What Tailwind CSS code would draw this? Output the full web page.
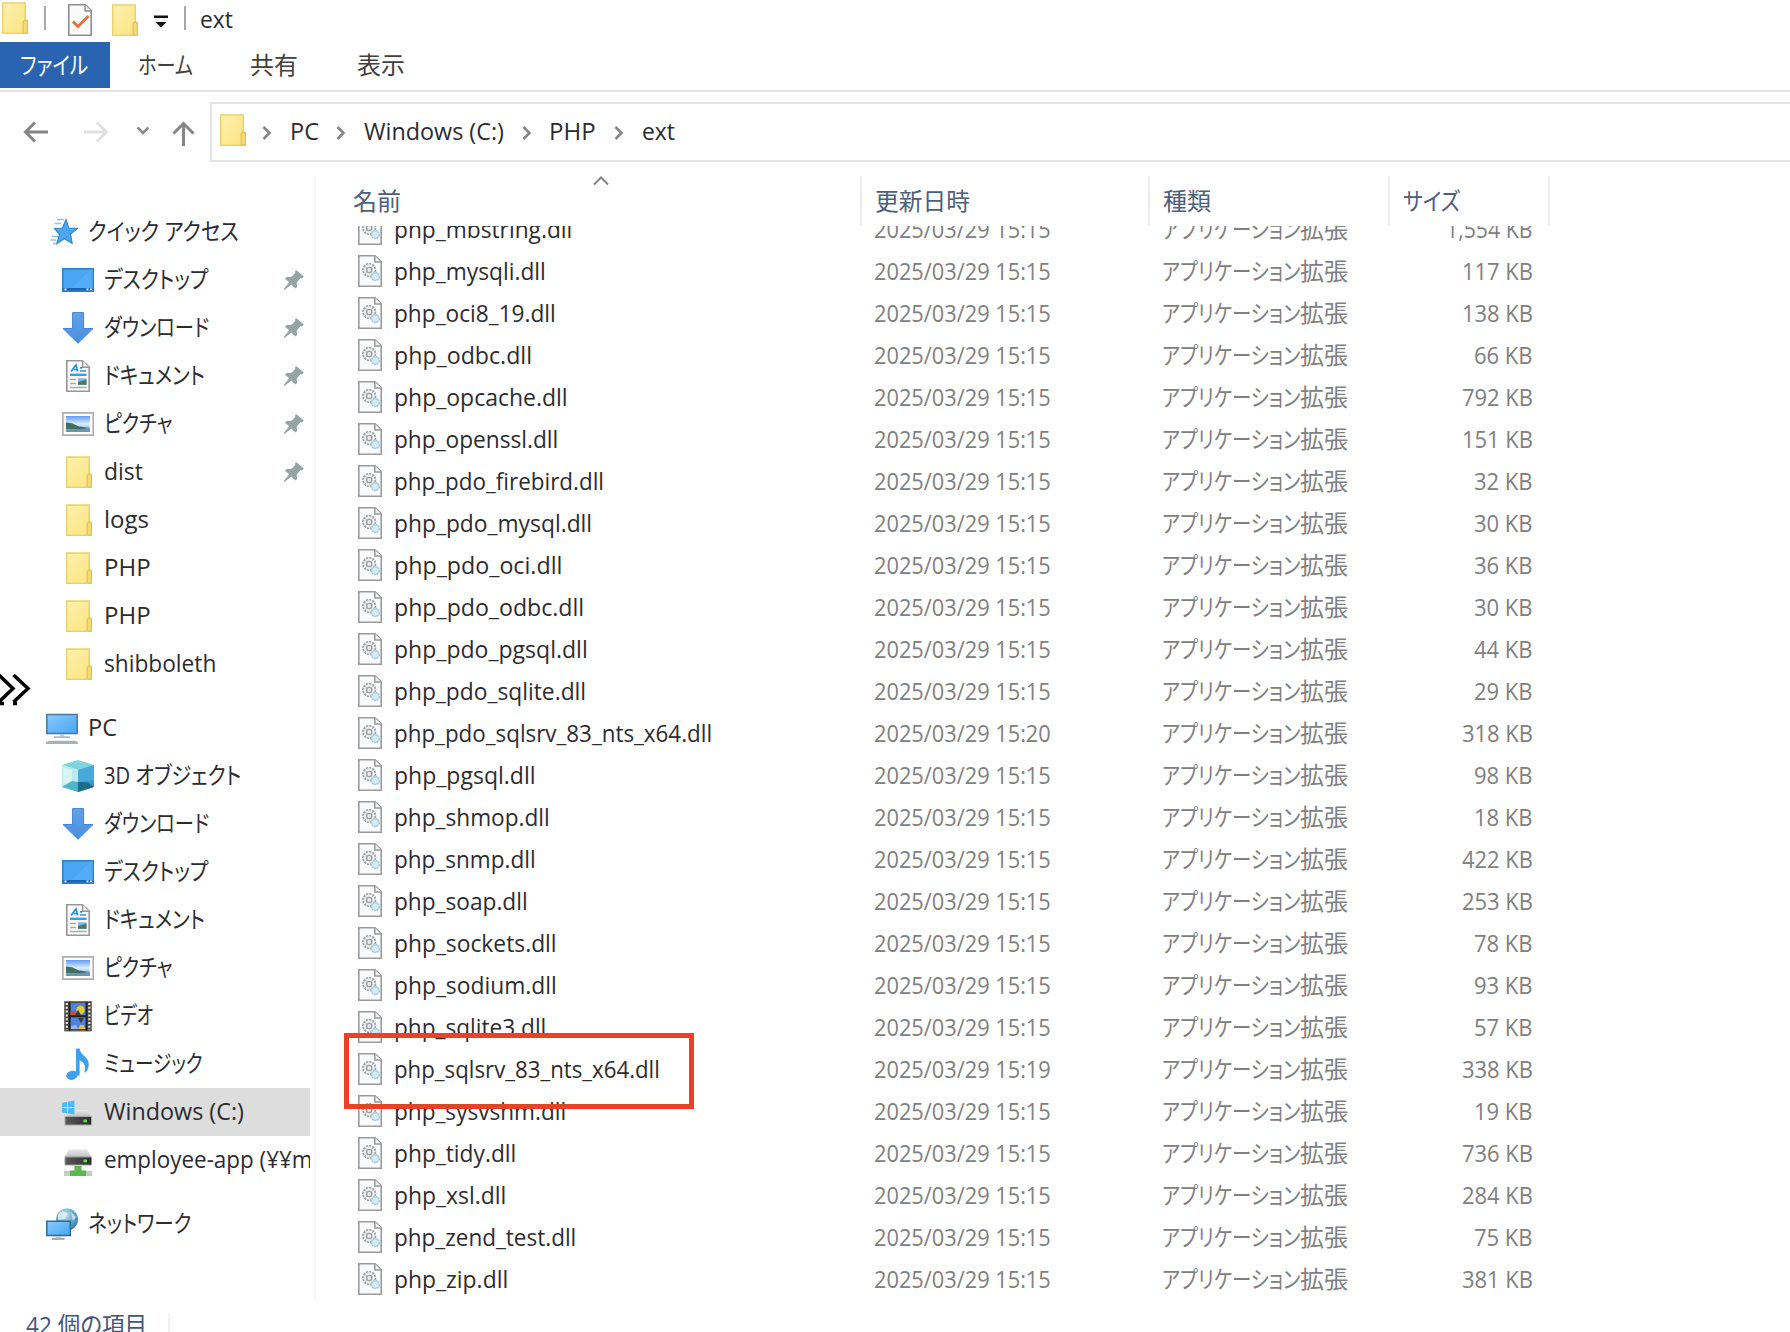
<!DOCTYPE html>
<html lang="ja">
<head>
    <meta charset="UTF-8">
    <meta name="viewport" content="width=device-width, initial-scale=1.0">
    <title>ext</title>
    <script src="https://cdn.jsdelivr.net/npm/@tailwindcss/browser@4"></script>
</head>
<body class="bg-white">
    <!-- icons -->
    <svg class="absolute size-0">
        <defs>
            <linearGradient id="g-folder" x1="0" y1="0" x2="1" y2="1"><stop offset="0" stop-color="#fff0ae"/><stop offset="1" stop-color="#fbe47f"/></linearGradient>
            <linearGradient id="g-screen" x1="0" y1="0" x2="1" y2="1"><stop offset="0" stop-color="#8ccbfc"/><stop offset="1" stop-color="#45a5f5"/></linearGradient>
            <linearGradient id="g-arrow" x1="0" y1="0" x2="0" y2="1"><stop offset="0" stop-color="#64a0e8"/><stop offset="1" stop-color="#4a8fe0"/></linearGradient>
            <linearGradient id="g-sky" x1="0" y1="0" x2="0" y2="1"><stop offset="0" stop-color="#5f9cf5"/><stop offset=".5" stop-color="#d9efff"/><stop offset="1" stop-color="#6f9fc4"/></linearGradient>
            <linearGradient id="g-metal" x1="0" y1="0" x2="0" y2="1"><stop offset="0" stop-color="#e9e9e9"/><stop offset="1" stop-color="#bfc1c2"/></linearGradient>
            <linearGradient id="g-disk" x1="0" y1="0" x2="1" y2="0"><stop offset="0" stop-color="#5a5a5a"/><stop offset="1" stop-color="#2b2b2b"/></linearGradient>
            <radialGradient id="g-globe" cx=".4" cy=".3" r=".8"><stop offset="0" stop-color="#c9e6f3"/><stop offset=".5" stop-color="#6aa9cb"/><stop offset="1" stop-color="#2f6f99"/></radialGradient>
        </defs>
        <symbol id="folder" viewBox="0 0 32 32">
            <path d="M4.7.9H27.3V18.5H29.3V31.2H4.7z" fill="url(#g-folder)" stroke="#ecd26c" stroke-width="1.5"/>
            <path d="M25.2 31V20l1-1.6h2.2l1 1.6V31z" fill="#f6dc78" stroke="#dfc15a" stroke-width="1.2"/>
        </symbol>
        <symbol id="check" viewBox="0 0 32 32">
            <path d="M4.8.8H21.5L27.2 6.5V31.2H4.8z" fill="#fafafa" stroke="#8e8e8e" stroke-width="1.6"/>
            <path d="M21 .8V7h6.2" fill="#eee" stroke="#8e8e8e" stroke-width="1.4"/>
            <path d="M9 17.5l5 5L24.5 12" fill="none" stroke="#e2703a" stroke-width="2.8"/>
        </symbol>
        <symbol id="dll" viewBox="0 0 32 32">
            <path d="M4.8.8H21L27.2 6.5V31.2H4.8z" fill="#fafbfc" stroke="#9b9b9b" stroke-width="1.6"/>
            <path d="M20.8.8V7H27.2" fill="#f0f0f0" stroke="#9b9b9b" stroke-width="1.5"/>
            <circle cx="15.200" cy="15" r="6.300" fill="#eceff0" stroke="#9aa0a2" stroke-width="1.600" stroke-dasharray="2.300 .9"/>
            <circle cx="15.200" cy="15" r="2.600" fill="none" stroke="#9aa0a2" stroke-width="1.400"/>
            <path d="M11 11l2 2M19 11l-2 2M11 19l2-2" stroke="#b5babc" stroke-width="1"/>
            <circle cx="21.200" cy="21.500" r="3.900" fill="#d6ebf8" stroke="#a6c9df" stroke-width="1.600" stroke-dasharray="2 .6"/>
        </symbol>
        <symbol id="star" viewBox="0 0 32 32">
            <path d="M11 3.500H18M8.500 7.500H15M6 20.500H12M4.500 24H10M7 27.500H10" stroke="#8cc4ee" stroke-width="1.400"/>
            <path d="M20 3.500l2.800 8.500 9 .3-7.300 5.700 1.700 9.300-7.800-4.600-7.700 5 2.800-9-5-6.300 8-.4z" fill="#4ba7ee" stroke="#2f86cd" stroke-width="1.100"/>
        </symbol>
        <symbol id="desktop" viewBox="0 0 32 32">
            <path d="M.7 4.700H31.300V27.300H.7z" fill="#4aa5f5" stroke="#2b80cc" stroke-width="1.400"/>
            <path d="M10 24L29 5.500H30.500V24z" fill="#5bb0fa" opacity=".6"/>
            <path d="M1.400 24H30.600V26.600H1.400z" fill="#1c66a8"/>
            <path d="M2.500 24.500h2v1.800h-2zM24.500 24.500h2v1.800h-2zM28 24.500h2v1.800h-2z" fill="#fff"/>
        </symbol>
        <symbol id="download" viewBox="0 0 32 32">
            <path d="M10.600.6H21.600V16.500H31L16 31.300 1 16.500H10.600z" fill="url(#g-arrow)" stroke="#4385d4" stroke-width="1"/>
        </symbol>
        <symbol id="document" viewBox="0 0 32 32">
            <path d="M4.800.8H20.500L27.200 7V31.200H4.800z" fill="#fcfcfc" stroke="#979797" stroke-width="1.600"/>
            <path d="M20.500.8V7.200H27.200" fill="#eee" stroke="#979797" stroke-width="1.500"/>
            <path d="M9 11.500l5-6.500 1.500 6.500M10.800 9.500h4.500M18 7.800h2M18 11h6" stroke="#358fd8" stroke-width="1.700" fill="none"/>
            <path d="M8 14.800H24.500" stroke="#3c9ae6" stroke-width="2.400"/>
            <path d="M8 19.500H14M8 23.500H14M8 27.500H24.500" stroke="#a9a9a9" stroke-width="1.500"/>
            <path d="M16 18.300h8.500v6.500H16z" fill="#7fb2e6"/><path d="M16 22l4-1 4.500-1.500v5.300H16z" fill="#4c7a61"/>
        </symbol>
        <symbol id="picture" viewBox="0 0 32 32">
            <path d="M.8 4.800H31.200V27.200H.8z" fill="#fff" stroke="#adb0ac" stroke-width="1.700"/>
            <path d="M4 8H28V24H4z" fill="url(#g-sky)"/>
            <path d="M4 14.500l6 .8 7 3.200 11 1.500-10 1.500L4 21z" fill="#456f55"/>
            <path d="M4 20.500l14 .5 10-1V24H4z" fill="#5f8fae" opacity=".7"/>
        </symbol>
        <symbol id="video" viewBox="0 0 32 32">
            <path d="M2.500 1.500H29.500V31H2.500z" fill="#4a4a48" stroke="#77736c" stroke-width="1"/>
            <path d="M4.800 3V30M27.300 3V30" stroke="#e3e3df" stroke-width="2.200" stroke-dasharray="2 1.800"/>
            <path d="M8.500 3H23.500V15H8.500zM8.500 17.500H23.500V29H8.500z" fill="#4c83e0"/>
            <path d="M7.600 2V31M24.500 2V31M8 16.300H24" stroke="#1e1e1e" stroke-width="1.600"/>
            <circle cx="18.500" cy="10" r="4.200" fill="#e6c72f"/><path d="M8.500 11h5v4h-5z" fill="#d44a38"/>
            <path d="M13 15l3-5 3 5zM16 18h6l-3 5z" fill="#3b3a33"/><path d="M16 29l2-4h3.500l2 4z" fill="#e8ba2c"/><path d="M9 26l5-1 2 4H9z" fill="#9ab7ee"/>
        </symbol>
        <symbol id="music" viewBox="0 0 32 32">
            <ellipse cx="10" cy="27.300" rx="5.800" ry="4.500" fill="#3fa0f2" transform="rotate(-12 10 27.300)"/>
            <path d="M14 .5h3.600c.5 6.500 9 8.500 9.200 15.500.1 4.500-2 7.500-3.800 9l-.5-1.500c1-3 1.200-8.500-4.900-11.300V27.500H14z" fill="#3fa0f2"/>
        </symbol>
        <symbol id="pc" viewBox="0 0 32 32">
            <path d="M.8 2.600H31.200V21.500H.8z" fill="url(#g-screen)" stroke="#48799b" stroke-width="1.500"/>
            <path d="M14 22.300h4v2h-4z" fill="#bfcad3"/><path d="M8 24.300H24V26H8z" fill="#a9b8c4"/>
            <path d="M3 28.700H29l3 1.500v1.800H0v-1.800z" fill="#a5b2bd"/>
        </symbol>
        <symbol id="cube" viewBox="0 0 32 32">
            <path d="M16 0L32 5 16 10 0 5z" fill="#7dd5e2"/>
            <path d="M0 5l16 5v22L0 27z" fill="#b9eaec"/>
            <path d="M32 5L16 10V32l16-5z" fill="#3a9ace"/>
            <path d="M16 10L32 5V20L16 22z" fill="#49a9da"/>
            <path d="M0 27l10-6 6 1V32z" fill="#4fb4c6"/>
            <path d="M16 22l10 .5L32 27 16 32z" fill="#1d6d86"/>
            <path d="M1 7l9 3v11L1 25z" fill="#e4f8f6" opacity=".7"/>
        </symbol>
        <symbol id="drive" viewBox="0 0 32 32">
            <g transform="translate(0 3.500)">
                <path d="M14 10.500h11l4 6.500H3.500z" fill="url(#g-metal)"/>
                <path d="M0 3.200L5 2.400V7.500H0zM6 2.200L12.500 1V7.500H6zM0 8.600H5V13.800L0 13zM6 8.600H12.500V15L6 13.900z" fill="#4dbdf1"/>
                <path d="M3 17H29.500V25.500H3z" fill="url(#g-disk)" stroke="#a8a8a8" stroke-width="1"/>
                <path d="M21.500 20h3.500v2.800h-3.500z" fill="#63e052"/>
            </g>
        </symbol>
        <symbol id="netdrive" viewBox="0 0 32 32">
            <g transform="translate(0 4)">
                <path d="M7 1.500H25l4.500 7.500H2.500z" fill="url(#g-metal)"/>
                <path d="M3 9H29.500V17H3z" fill="url(#g-disk)" stroke="#9b9b9b" stroke-width="1"/>
                <path d="M21.500 11.500H25v2.800h-3.500z" fill="#63e052"/>
                <path d="M12.500 18h7v4.500h5v5.500H7.500v-5.500h5z" fill="#5cb84f"/>
                <path d="M2 23h5v5H2zM25 23h5v5h-5z" fill="#c4cbc4"/>
            </g>
        </symbol>
        <symbol id="network" viewBox="0 0 32 32">
            <circle cx="21" cy="11.500" r="11" fill="url(#g-globe)"/>
            <path d="M14 4c3-2 5 0 7 1s-1 3-2 6l-6 1c-2-2-1-6 1-8zM25 4l5 5-3 4z" fill="#e6f3f7" opacity=".75"/>
            <path d="M.8 13.300H24.300V27.600H.8z" fill="url(#g-screen)" stroke="#2d6c95" stroke-width="1.500"/>
            <path d="M9.500 28.300h6v1.700h-6z" fill="#bcc6cd"/><path d="M6 30H18.500V32H6z" fill="#a4b0b9"/>
        </symbol>
        <symbol id="pin" viewBox="0 0 22 22">
            <path d="M13.500 1.200L20.800 7.500 19 9.500l-1.500-.2-3.800 4.300.5 4.400-2 1.400-4-4L1.500 21 .6 20.300 6 13.300 2 9.700l1.700-1.800 4.500.2 4-4-.3-1.500z" fill="#94a3a3"/>
        </symbol>
        <symbol id="sep" viewBox="0 0 10 14">
            <path d="M1.500 1l6 6-6 6" fill="none" stroke="#858585" stroke-width="2.500"/>
        </symbol>
    </svg>

    <div class="relative flex h-[1332px] w-[1790px] flex-col overflow-hidden bg-white font-['Open_Sans','Noto_Sans_CJK_JP',sans-serif] text-[23.5px] leading-8 whitespace-nowrap text-[#2c2c30]">
        <!-- title bar -->
        <header class="flex h-[42px] items-start">
            <svg class="-ml-0.5 mt-0.5 size-8"><use href="#folder"/></svg>
            <div class="mt-1.5 ml-3.5 h-6 w-0.5 bg-[#a8a8a8]"></div>
            <svg class="mt-1 ml-[18px] size-8"><use href="#check"/></svg>
            <svg class="mt-1 ml-3 size-8"><use href="#folder"/></svg>
            <svg class="mt-[15px] ml-3.5 h-3 w-3.5" viewBox="0 0 14 12"><path d="M0 .5H14V3H0zM1.500 7H12.500L7 12.500z" fill="#111"/></svg>
            <div class="mt-1.5 ml-4 h-6 w-0.5 bg-[#a8a8a8]"></div>
            <div class="mt-[3px] ml-3.5"><span data-w="33">ext</span></div>
        </header>

        <!-- ribbon tabs -->
        <nav class="flex h-[50px] items-start border-b-2 border-[#e4e4e4] text-[24px] leading-[46px] text-[#404040]">
            <div class="w-[110px] bg-[#2a64b0] pl-5 text-white"><span data-w="68">ファイル</span></div>
            <div class="w-[111px] pl-7"><span data-w="55">ホーム</span></div>
            <div class="w-[106px] pl-[29px]"><span data-w="48">共有</span></div>
            <div class="pl-[30px]"><span data-w="48">表示</span></div>
        </nav>

        <!-- address bar -->
        <div class="flex h-[84px] items-start pt-2.5">
            <svg class="mt-[19px] ml-[23px] h-[22px] w-[26px]" viewBox="0 0 26 22" fill="none" stroke="#858585" stroke-width="3"><path d="M25 11H3M12 1.500L2.500 11l9.500 9.500"/></svg>
            <svg class="mt-[19px] ml-[34px] h-[22px] w-[26px]" viewBox="0 0 26 22" fill="none" stroke="#dfe1df" stroke-width="2.800"><path d="M1 11H23M14 1.500L23.500 11 14 20.500"/></svg>
            <svg class="mt-6 ml-[27px] h-2.5 w-3.5" viewBox="0 0 14 10" fill="none" stroke="#8a8a8a" stroke-width="2.500"><path d="M1.500 1.500L7 7l5.500-5.500"/></svg>
            <svg class="mt-[18px] ml-[22px] h-[26px] w-6" viewBox="0 0 24 26" fill="none" stroke="#858585" stroke-width="3"><path d="M11.500 26V4M1.500 13.500l10-10 10 10"/></svg>
            <div class="ml-[14px] flex h-[60px] flex-1 items-center border-2 border-r-0 border-[#e4e4e4] pl-1">
                <svg class="size-8 -mt-1"><use href="#folder"/></svg>
                <svg class="mt-0.5 ml-3.5 h-3.5 w-2.5"><use href="#sep"/></svg>
                <div class="-mt-0.5 ml-[18px] w-[46px]"><span data-w="29">PC</span></div>
                <svg class="mt-0.5 h-3.5 w-2.5"><use href="#sep"/></svg>
                <div class="-mt-0.5 ml-[18px] w-[158px]"><span data-w="140">Windows (C:)</span></div>
                <svg class="mt-0.5 h-3.5 w-2.5"><use href="#sep"/></svg>
                <div class="-mt-0.5 ml-[17px] w-[65px]"><span data-w="47">PHP</span></div>
                <svg class="mt-0.5 h-3.5 w-2.5"><use href="#sep"/></svg>
                <div class="-mt-0.5 ml-[18px]"><span data-w="33">ext</span></div>
            </div>
        </div>

        <div class="flex h-[1125px]">
            <!-- navigation pane -->
            <aside class="w-[316px] border-r-2 border-[#f6f6f6] pt-8">
                <div id="quick"></div>
                <div id="pc-tree" class="mt-4"></div>
                <div id="net-tree" class="mt-4"></div>
            </aside>

            <!-- file list -->
            <main class="flex-1">
                <div class="flex h-[50px] text-[24px] leading-[50px] text-[#4c607a]">
                    <div class="relative w-[546px] border-r-2 border-[#ececec] pl-[37px]">
                        <span data-w="48">名前</span>
                        <svg class="absolute top-0 left-[277px] h-2.5 w-4" viewBox="0 0 16 10" fill="none" stroke="#858585" stroke-width="2"><path d="M1 8.500L8 1.500l7 7"/></svg>
                    </div>
                    <div class="w-72 border-r-2 border-[#ececec] pl-[13px]"><span data-w="95">更新日時</span></div>
                    <div class="w-60 border-r-2 border-[#ececec] pl-[13px]"><span data-w="48">種類</span></div>
                    <div class="w-40 border-r-2 border-[#ececec] pl-[13px]"><span data-w="57">サイズ</span></div>
                </div>
                <div class="flex h-[1075px] flex-col overflow-hidden">
                    <div id="files" class="-mt-[18px]"></div>
                </div>
            </main>
        </div>

        <!-- status bar -->
        <footer class="flex h-[31px] items-start overflow-hidden text-[#42567a]">
            <div class="w-[168px] pt-2 pl-[26px]"><span data-w="121">42 個の項目</span></div>
            <div class="mt-3 h-5 w-0.5 bg-[#f0f0f0]"></div>
        </footer>

        <!-- highlight and side handle -->
        <div class="absolute top-[1033px] left-[344px] h-[76px] w-[350px] border-5 border-[#ea4127]"></div>
        <svg class="absolute top-[672px] left-0 h-[34px] w-8" viewBox="0 0 32 34" fill="none" stroke="#000" stroke-width="3.500"><path d="M-1 3L13 16.500-1 30M13.500 3L28 16.500 13.500 30M0 31.500h4M13 31.500h4"/></svg>
    </div>

    <script>
        // icon, label, label width, pinned
        const quick = [
            ["desktop", "デスクトップ", 104, true],
            ["download", "ダウンロード", 105, true],
            ["document", "ドキュメント", 101, true],
            ["picture", "ピクチャ", 68, true],
            ["folder", "dist", 39, true],
            ["folder", "logs", 45],
            ["folder", "PHP", 47],
            ["folder", "PHP", 47],
            ["folder", "shibboleth", 112]
        ];
        const pc = [
            ["cube", "3D オブジェクト", 137],
            ["download", "ダウンロード", 105],
            ["desktop", "デスクトップ", 104],
            ["document", "ドキュメント", 101],
            ["picture", "ピクチャ", 68],
            ["video", "ビデオ", 49],
            ["music", "ミュージック", 99],
            ["drive", "Windows (C:)", 140],
            ["netdrive", "employee-app (¥¥m", 209]
        ];

        // name, name width, size, size width, time
        const files = [
            ["php_mbstring.dll", 178, "1,554 KB", 87],
            ["php_mysqli.dll", 152, "117 KB", 71],
            ["php_oci8_19.dll", 162, "138 KB", 71],
            ["php_odbc.dll", 138, "66 KB", 59],
            ["php_opcache.dll", 174, "792 KB", 71],
            ["php_openssl.dll", 164, "151 KB", 71],
            ["php_pdo_firebird.dll", 210, "32 KB", 59],
            ["php_pdo_mysql.dll", 198, "30 KB", 59],
            ["php_pdo_oci.dll", 168, "36 KB", 59],
            ["php_pdo_odbc.dll", 190, "30 KB", 59],
            ["php_pdo_pgsql.dll", 194, "44 KB", 59],
            ["php_pdo_sqlite.dll", 192, "29 KB", 59],
            ["php_pdo_sqlsrv_83_nts_x64.dll", 318, "318 KB", 71, "15:20"],
            ["php_pgsql.dll", 142, "98 KB", 59],
            ["php_shmop.dll", 156, "18 KB", 59],
            ["php_snmp.dll", 142, "422 KB", 71],
            ["php_soap.dll", 134, "253 KB", 71],
            ["php_sockets.dll", 163, "78 KB", 59],
            ["php_sodium.dll", 163, "93 KB", 59],
            ["php_sqlite3.dll", 152, "57 KB", 59],
            ["php_sqlsrv_83_nts_x64.dll", 266, "338 KB", 71, "15:19"],
            ["php_sysvshm.dll", 172, "19 KB", 59],
            ["php_tidy.dll", 122, "736 KB", 71],
            ["php_xsl.dll", 112, "284 KB", 71],
            ["php_zend_test.dll", 182, "75 KB", 59],
            ["php_zip.dll", 114, "381 KB", 71]
        ];

        function rootItem(icon, label, width) {
            return `<div class="flex h-12 items-center pl-[46px]">
                <svg class="mr-2.5 size-8"><use href="#${icon}"/></svg>
                <div class="-mt-0.5"><span data-w="${width}">${label}</span></div>
            </div>`;
        }

        function treeItem([icon, label, width, pinned]) {
            const active = icon === "drive" ? "bg-[#dddddd]" : "";
            const pin = pinned ? '<svg class="mr-[5px] ml-auto size-[22px]"><use href="#pin"/></svg>' : "";
            return `<div class="flex h-12 w-[310px] items-center overflow-hidden pl-[62px] ${active}">
                <svg class="mr-2.5 size-8 shrink-0"><use href="#${icon}"/></svg>
                <div class="-mt-0.5"><span data-w="${width}">${label}</span></div>${pin}
            </div>`;
        }

        function fileRow([name, width, size, sizeWidth, time = "15:15"]) {
            return `<div class="flex h-[42px] items-center pl-[38px] text-[#808080]">
                <svg class="mr-2 size-8"><use href="#dll"/></svg>
                <div class="w-[480px] text-[#2c2c30]"><span data-w="${width}">${name}</span></div>
                <div class="w-72"><span data-w="177">2025/03/29 ${time}</span></div>
                <div class="flex w-[187px]"><div class="w-[138px]"><span data-w="138">アプリケーション</span></div><span data-w="48">拡張</span></div>
                <div class="flex w-[184px] justify-end"><span data-w="${sizeWidth}" data-right>${size}</span></div>
            </div>`;
        }

        document.getElementById("quick").innerHTML = rootItem("star", "クイック アクセス", 151) + quick.map(treeItem).join("");
        document.getElementById("pc-tree").innerHTML = rootItem("pc", "PC", 29) + pc.map(treeItem).join("");
        document.getElementById("net-tree").innerHTML = rootItem("network", "ネットワーク", 103);
        document.getElementById("files").innerHTML = files.map(fileRow).join("");

        // condense each label to its own width, again whenever its font changes
        const fit = el => {
            el.style.transform = `scaleX(${el.dataset.w / el.offsetWidth})`;
        };
        const observer = new ResizeObserver(entries => entries.forEach(e => fit(e.target)));
        document.querySelectorAll("[data-w]").forEach(el => {
            el.className = "inline-block shrink-0 [font-feature-settings:'palt']";
            el.style.transformOrigin = "right" in el.dataset ? "right" : "left";
            observer.observe(el);
        });
    </script>
</body>
</html>
